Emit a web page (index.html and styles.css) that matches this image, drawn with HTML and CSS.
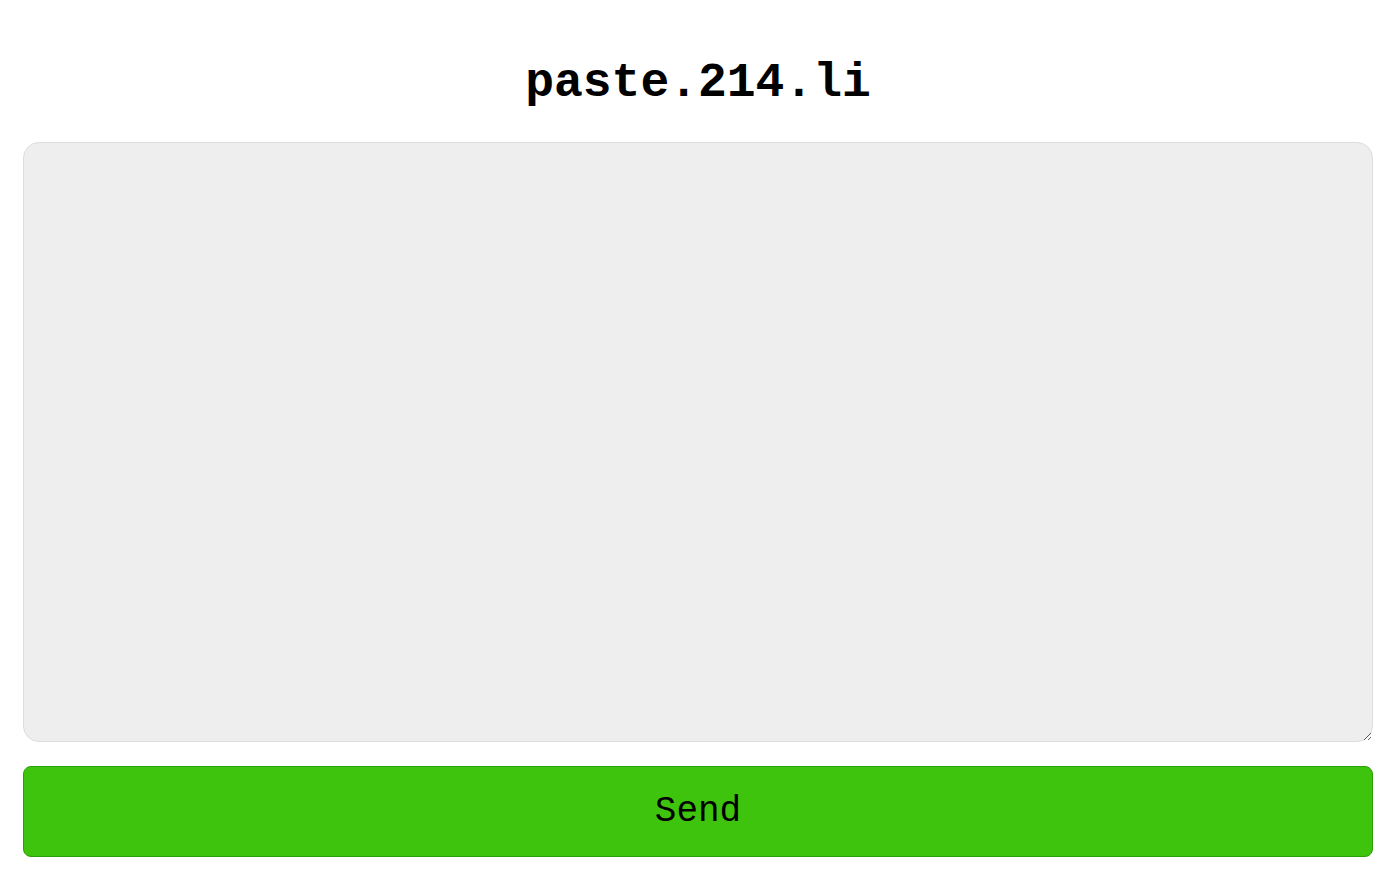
FILE: index.html
```html
<!DOCTYPE html>
<html lang="en">
<head>
<meta charset="utf-8">
<title>paste.214.li</title>
<link rel="stylesheet" href="styles.css">
</head>
<body>
<main class="page">
  <h1 class="title">paste.214.li</h1>
  <form class="paste-form">
    <textarea class="paste-input" name="content"></textarea>
    <button class="send-btn" type="submit">Send</button>
  </form>
</main>
</body>
</html>
```

FILE: styles.css
```css
html, body {
  margin: 0;
  padding: 0;
  background: #ffffff;
}

.page {
  padding: 0 20px 0 23px;
  font-family: "Liberation Mono", "DejaVu Sans Mono", monospace;
}

.title {
  margin: 0;
  padding-top: 55px;
  height: 90px;
  box-sizing: border-box;
  text-align: center;
  font-size: 48px;
  line-height: 56px;
  font-weight: bold;
  color: #000;
  font-family: "Liberation Mono", monospace;
}

.paste-form {
  display: flex;
  flex-direction: column;
  gap: 24px;
  margin-top: 52px;
}

.paste-input {
  box-sizing: border-box;
  width: 100%;
  height: 600px;
  background: #eeeeee;
  border: 1px solid #dddddd;
  border-radius: 16px;
  resize: vertical;
  display: block;
  margin: 0;
}

.send-btn {
  box-sizing: border-box;
  width: 100%;
  height: 91px;
  background: #3ec40c;
  border: 1px solid #2c9e06;
  border-radius: 8px;
  font-family: "Liberation Mono", monospace;
  font-size: 36px;
  color: #000;
  margin: 0;
  padding: 0;
}
```
